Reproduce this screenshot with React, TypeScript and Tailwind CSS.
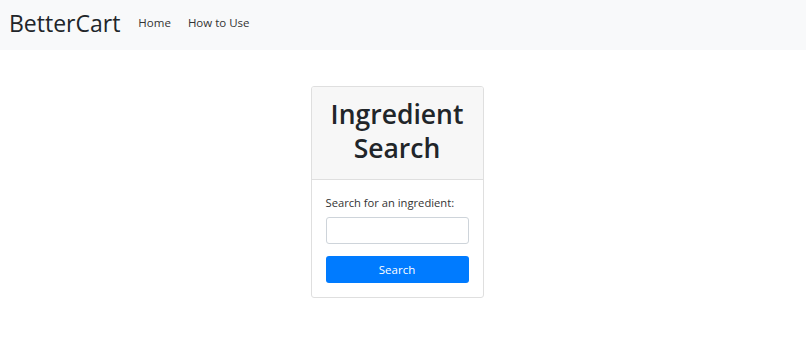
import { useState } from "react";

const font = { fontFamily: '"Open Sans", "Noto Sans", sans-serif' };

const App: React.FC = () => {
  const [query, setQuery] = useState<string>("");

  return (
    <div className="min-h-screen w-screen bg-white text-[#212529]" style={font}>
      <nav className="flex items-center h-[50px] bg-[#f8f9fa] px-[9px] pb-[4px]">
        <span className="text-[23px] leading-none text-[#212529] mr-[18px]">BetterCart</span>
        <div className="flex items-center gap-[17px] text-[11.5px] text-[#333]">
          <span>Home</span>
          <span>How to Use</span>
        </div>
      </nav>

      <div className="flex justify-center pt-[36px] pr-[12px]">
        <div className="w-[173px] border border-[#dfdfdf] rounded-[3px] overflow-hidden">
          <div className="bg-[#f7f7f7] border-b border-[#dfdfdf] h-[93px] flex items-center justify-center pb-[4px]">
            <h1 className="text-[26.5px] font-semibold leading-[34px] text-center text-[#212529]">
              Ingredient
              <br />
              Search
            </h1>
          </div>
          <div className="px-[14px] pt-[14px] pb-[14px] flex flex-col">
            <label className="text-[11.2px] leading-[18px] text-[#333] mb-[5px]">Search for an ingredient:</label>
            <input
              value={query}
              onChange={(e) => setQuery(e.target.value)}
              className="h-[27px] w-full border border-[#ced4da] rounded-[3px] outline-none px-2"
            />
            <button className="mt-[12px] h-[27px] w-full bg-[#007bff] text-white text-[11.5px] rounded-[3px]">
              Search
            </button>
          </div>
        </div>
      </div>
    </div>
  );
};

export default App;
